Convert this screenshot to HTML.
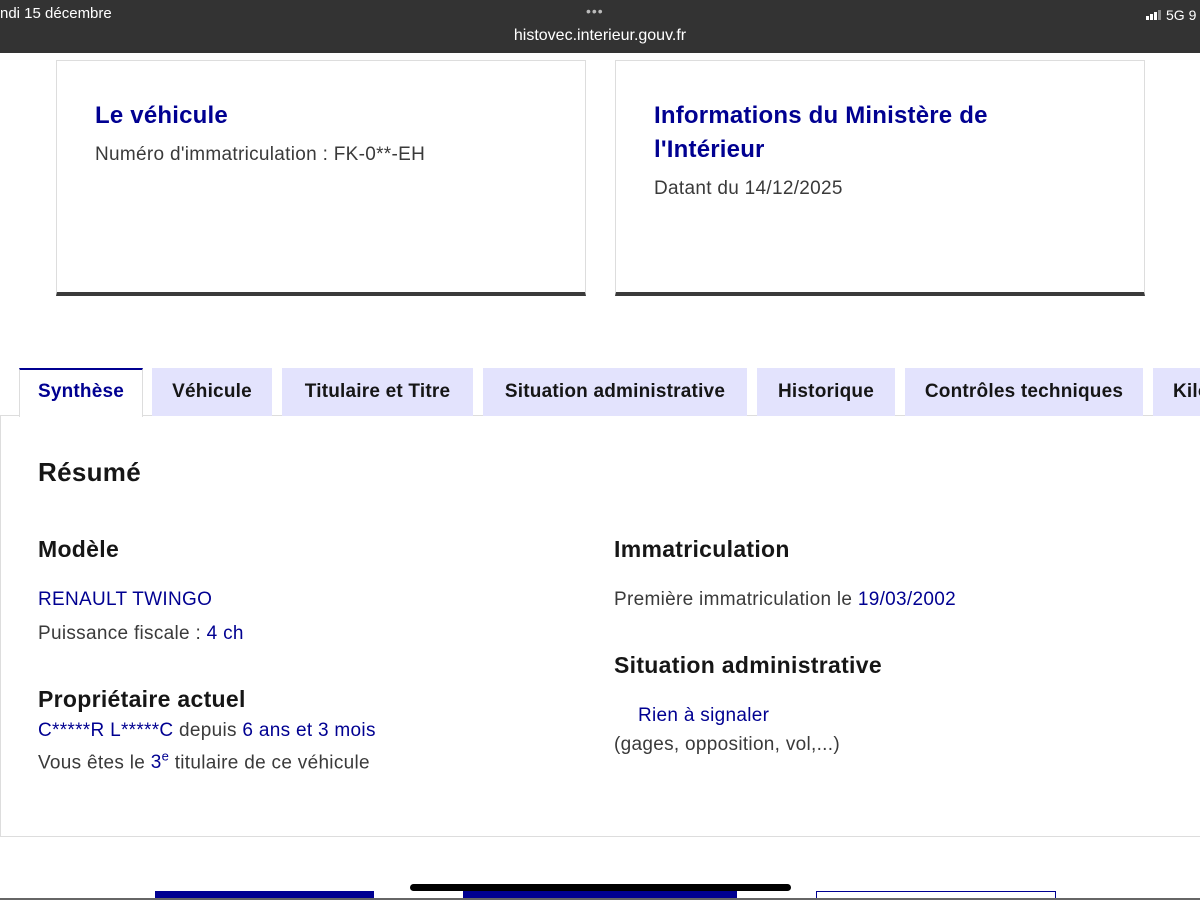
<!DOCTYPE html>
<html><head><meta charset="utf-8"><style>
*{margin:0;padding:0;box-sizing:border-box}
body{width:1200px;height:900px;overflow:hidden;background:#fff;font-family:"Liberation Sans",sans-serif;color:#3a3a3a;position:relative}
.a{position:absolute}
.bar{left:0;top:0;width:1200px;height:53px;background:#333;color:#fff}
.card{top:60px;width:530px;height:236px;border:1px solid #ddd;border-bottom:4px solid #3a3a3a}
.card h2{position:absolute;left:38px;top:38px;font-size:24px;color:#000091;font-weight:bold;line-height:34px;letter-spacing:0.2px}
.card p{position:absolute;left:38px;font-size:19px;color:#3a3a3a;letter-spacing:0.3px}
.tab{top:368px;height:48px;background:#e3e3fd;font-size:19px;font-weight:bold;color:#161616;text-align:center;line-height:48px;white-space:nowrap;overflow:hidden;letter-spacing:0.2px}
.blue{color:#000091}
.t{font-size:19px;white-space:nowrap;letter-spacing:0.3px}
.h{font-weight:bold;color:#161616;white-space:nowrap;letter-spacing:0.3px}
</style></head><body>
<div class="a bar">
 <div class="a" style="left:0;top:5px;font-size:15px">ndi 15 décembre</div>
 <div class="a" style="left:586px;top:3px;font-size:14px;letter-spacing:1px;color:#bbb">•••</div>
 <div class="a" style="left:0;width:1200px;text-align:center;top:27px;font-size:16px">histovec.interieur.gouv.fr</div>
 <div class="a" style="left:1146px;top:7px;font-size:14px;white-space:nowrap"><span style="display:inline-block;width:3px;height:4px;background:#fff;margin-right:1px"></span><span style="display:inline-block;width:3px;height:6px;background:#fff;margin-right:1px"></span><span style="display:inline-block;width:3px;height:8px;background:#fff;margin-right:1px"></span><span style="display:inline-block;width:3px;height:10px;background:#888;margin-right:5px"></span>5G 9</div>
</div>
<div class="a card" style="left:56px"><h2>Le véhicule</h2><p style="top:83px">Numéro d'immatriculation : FK-0**-EH</p></div>
<div class="a card" style="left:615px"><h2>Informations du Ministère de<br>l'Intérieur</h2><p style="top:117px">Datant du 14/12/2025</p></div>

<div class="a" style="left:0;top:415px;width:1200px;height:422px;border:1px solid #ddd;border-right:none"></div>
<div class="a tab" style="left:19px;width:124px;background:#fff;border:1px solid #ddd;border-top:2px solid #000091;border-bottom:none;color:#000091;height:49px;line-height:44px">Synthèse</div>
<div class="a tab" style="left:152px;width:120px">Véhicule</div>
<div class="a tab" style="left:282px;width:191px">Titulaire et Titre</div>
<div class="a tab" style="left:483px;width:264px">Situation administrative</div>
<div class="a tab" style="left:757px;width:138px">Historique</div>
<div class="a tab" style="left:905px;width:238px">Contrôles techniques</div>
<div class="a tab" style="left:1153px;width:60px;text-align:left;padding-left:20px">Kilométrage</div>

<div class="a h" style="left:38px;top:457px;font-size:26px">Résumé</div>
<div class="a h" style="left:38px;top:536px;font-size:23px">Modèle</div>
<div class="a t blue" style="left:38px;top:589px">RENAULT TWINGO</div>
<div class="a t" style="left:38px;top:623px">Puissance fiscale : <span class="blue">4 ch</span></div>
<div class="a h" style="left:38px;top:686px;font-size:23px">Propriétaire actuel</div>
<div class="a t" style="left:38px;top:720px"><span class="blue">C*****R L*****C</span> depuis <span class="blue">6 ans et 3 mois</span></div>
<div class="a t" style="left:38px;top:749px">Vous êtes le <span class="blue">3<sup style="font-size:13px">e</sup></span> titulaire de ce véhicule</div>

<div class="a h" style="left:614px;top:536px;font-size:23px">Immatriculation</div>
<div class="a t" style="left:614px;top:589px">Première immatriculation le <span class="blue">19/03/2002</span></div>
<div class="a h" style="left:614px;top:652px;font-size:23px">Situation administrative</div>
<div class="a t blue" style="left:638px;top:705px">Rien à signaler</div>
<div class="a t" style="left:614px;top:734px">(gages, opposition, vol,...)</div>

<div class="a" style="left:155px;top:891px;width:219px;height:9px;background:#000091"></div>
<div class="a" style="left:463px;top:891px;width:274px;height:9px;background:#000091"></div>
<div class="a" style="left:816px;top:891px;width:240px;height:9px;border:1px solid #000091;border-bottom:none"></div>
<div class="a" style="left:410px;top:884px;width:381px;height:7px;background:#000;border-radius:4px"></div>
<div class="a" style="left:0;top:898px;width:1200px;height:2px;background:#666"></div>
</body></html>
